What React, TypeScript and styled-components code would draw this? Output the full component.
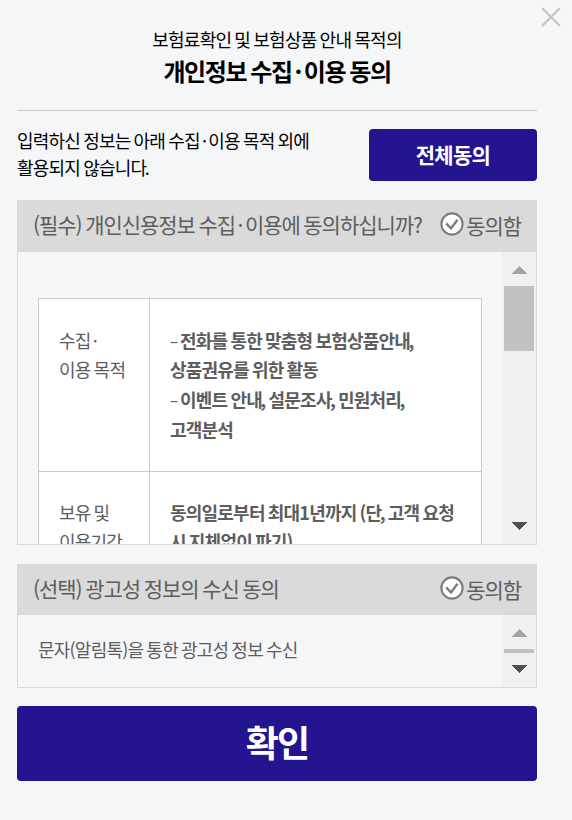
import React from "react";
import styled, { createGlobalStyle } from "styled-components";

const GlobalStyle = createGlobalStyle`
  * { box-sizing: border-box; }
  body {
    margin: 0;
    background: #f5f6f8;
    font-family: "Noto Sans CJK KR", "Noto Sans KR", sans-serif;
    color: #000;
    word-spacing: -1.2px;
    overflow: hidden;
  }
  h1, p { margin: 0; font-weight: 400; }
  button { font-family: inherit; border: 0; padding: 0; }
`;

const Dialog = styled.main`
  position: relative;
  width: 572px;
  height: 820px;
  padding: 26px 35px 0 17px;
  background: #f5f6f8;
`;

const CloseButton = styled.button`
  position: absolute;
  top: 7px;
  right: 11px;
  width: 20px;
  height: 20px;
  background: none;
  svg { display: block; }
`;

const Heading = styled.header`
  height: 85px;
  border-bottom: 1px solid #cbcbcb;
  text-align: center;
  white-space: nowrap;
`;

const Subtitle = styled.p`
  font-size: 18px;
  line-height: 27px;
  letter-spacing: -0.75px;
`;

const Title = styled.h1`
  font-size: 24px;
  line-height: 36px;
  font-weight: 700;
  letter-spacing: -1.4px;
`;

const Intro = styled.section`
  display: flex;
  align-items: flex-start;
  justify-content: space-between;
  height: 89px;
  padding-top: 18px;
`;

const IntroText = styled.p`
  margin-top: -2px;
  font-size: 18px;
  line-height: 27px;
  letter-spacing: -0.78px;
  white-space: nowrap;
`;

const PrimaryButton = styled.button<{ $large?: boolean }>`
  display: block;
  width: ${(p) => (p.$large ? "520px" : "168px")};
  height: ${(p) => (p.$large ? "75px" : "52px")};
  padding-bottom: ${(p) => (p.$large ? "5px" : "2px")};
  border-radius: 4px;
  background: #231590;
  color: #fff;
  font-weight: 700;
  font-size: ${(p) => (p.$large ? "36px" : "21px")};
  line-height: ${(p) => (p.$large ? "70px" : "50px")};
  letter-spacing: ${(p) => (p.$large ? "-1.8px" : "-0.7px")};
`;

const Panel = styled.section<{ $gap: number }>`
  margin-bottom: ${(p) => p.$gap}px;
  color: #5d5d5d;
`;

const PanelHeader = styled.div<{ $height: number }>`
  display: flex;
  align-items: flex-start;
  justify-content: space-between;
  height: ${(p) => p.$height}px;
  padding: 8px 16px 0 16px;
  background: #dadada;
  font-size: 21px;
  line-height: 32px;
  letter-spacing: -1.05px;
  white-space: nowrap;
`;

const Agree = styled.label`
  display: flex;
  align-items: flex-start;
  gap: 2px;
  svg { display: block; margin-top: 4px; }
`;

const AgreeText = styled.span`
  margin-top: 1px;
`;

const PanelBody = styled.div<{ $height: number }>`
  display: flex;
  height: ${(p) => p.$height}px;
  border: 1px solid #d8d9da;
  border-top: 0;
  overflow: hidden;
`;

const Content = styled.div<{ $top: number }>`
  flex: 1;
  padding: ${(p) => p.$top}px 20px 0;
  font-size: 18px;
  line-height: 29.7px;
  letter-spacing: -0.78px;
  white-space: nowrap;
`;

const Table = styled.div`
  width: 444px;
  border: 1px solid #c9cacb;
  background: #fff;
`;

const Row = styled.div<{ $inset: number }>`
  display: grid;
  grid-template-columns: 111px 1fr;
  height: 173px;
  border-bottom: 1px solid #c9cacb;
  > div { padding-top: ${(p) => p.$inset}px; }
`;

const Cell = styled.div<{ $strong?: boolean }>`
  padding-left: 20px;
  font-weight: ${(p) => (p.$strong ? 700 : 400)};
  border-right: ${(p) => (p.$strong ? "0" : "1px solid #c9cacb")};
`;

const Dash = styled.span`
  display: inline-block;
  width: 10px;
  font-size: 15px;
  line-height: 1;
  font-weight: 500;
  vertical-align: 1px;
`;

const Dot = styled.span`
  margin: 0 0.12em;
`;

const Comma = styled.span`
  margin-left: -1.7px;
`;

const Track = styled.div`
  display: flex;
  flex-direction: column;
  align-items: center;
  width: 34px;
  background: #f0f0f0;
  svg { display: block; flex: none; }
`;

const Thumb = styled.div<{ $height: number }>`
  width: 30px;
  height: ${(p) => p.$height}px;
  background: #c1c1c1;
`;

const Spacer = styled.div`
  flex: 1;
`;

function Check() {
  return (
    <svg width="24" height="24" viewBox="0 0 24 24">
      <circle cx="12" cy="12" r="10.6" fill="#fff" stroke="#7c7c7c" strokeWidth="2.1" />
      <path d="M6.2 11.4 L11 16.5 L17.5 7.8" fill="none" stroke="#7c7c7c" strokeWidth="2.4" />
    </svg>
  );
}

function ScrollBar({ thumb }: { thumb: number }) {
  return (
    <Track>
      <svg width="34" height="34" shapeRendering="crispEdges">
        <path d="M9 22 L17 14 L25 22 Z" fill="#a3a3a3" />
      </svg>
      <Thumb $height={thumb} />
      <Spacer />
      <svg width="34" height="34" shapeRendering="crispEdges">
        <path d="M9 12 L17 20 L25 12 Z" fill="#505050" />
      </svg>
    </Track>
  );
}

function AgreeHeader({ height, children }: { height: number; children: React.ReactNode }) {
  return (
    <PanelHeader $height={height}>
      <span>{children}</span>
      <Agree>
        <Check />
        <AgreeText>동의함</AgreeText>
      </Agree>
    </PanelHeader>
  );
}

export default function App() {
  return (
    <>
      <GlobalStyle />
      <Dialog lang="ko">
        <CloseButton aria-label="닫기">
          <svg width="20" height="20" viewBox="0 0 20 20">
            <path d="M1 1 L19 19 M19 1 L1 19" stroke="#c2c3c4" strokeWidth="2" />
          </svg>
        </CloseButton>
        <Heading>
          <Subtitle>보험료확인 및 보험상품 안내 목적의</Subtitle>
          <Title>
            개인정보 수집<Dot>·</Dot>이용 동의
          </Title>
        </Heading>
        <Intro>
          <IntroText>
            입력하신 정보는 아래 수집<Dot>·</Dot>이용 목적 외에
            <br />
            활용되지 않습니다<Comma>.</Comma>
          </IntroText>
          <PrimaryButton>전체동의</PrimaryButton>
        </Intro>
        <Panel $gap={19}>
          <AgreeHeader height={52}>
            (필수) 개인신용정보 수집<Dot>·</Dot>이용에 동의하십니까?
          </AgreeHeader>
          <PanelBody $height={293}>
            <Content $top={46}>
              <Table>
                <Row $inset={26.7}>
                  <Cell>
                    수집<Dot>·</Dot>
                    <br />
                    이용 목적
                  </Cell>
                  <Cell $strong>
                    <Dash>–</Dash>전화를 통한 맞춤형 보험상품안내<Comma>,</Comma>
                    <br />
                    상품권유를 위한 활동
                    <br />
                    <Dash>–</Dash>이벤트 안내<Comma>,</Comma> 설문조사<Comma>,</Comma> 민원처리<Comma>,</Comma>
                    <br />
                    고객분석
                  </Cell>
                </Row>
                <Row $inset={25.7}>
                  <Cell>
                    보유 및
                    <br />
                    이용기간
                  </Cell>
                  <Cell $strong>
                    동의일로부터 최대1년까지 (단<Comma>,</Comma> 고객 요청
                    <br />시 지체없이 파기)
                  </Cell>
                </Row>
              </Table>
            </Content>
            <ScrollBar thumb={65} />
          </PanelBody>
        </Panel>
        <Panel $gap={18}>
          <AgreeHeader height={51}>(선택) 광고성 정보의 수신 동의</AgreeHeader>
          <PanelBody $height={73}>
            <Content $top={20}>문자(알림톡)을 통한 광고성 정보 수신</Content>
            <ScrollBar thumb={4} />
          </PanelBody>
        </Panel>
        <PrimaryButton $large>확인</PrimaryButton>
      </Dialog>
    </>
  );
}
